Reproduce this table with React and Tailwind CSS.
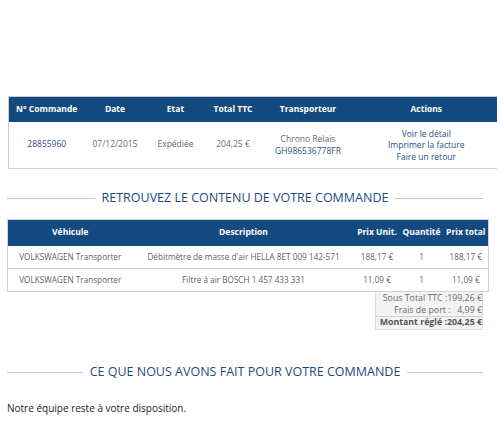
import React from "react";

const font = { fontFamily: '"Open Sans", "Liberation Sans", sans-serif' };

const SectionTitle = ({ children }) => (
  <div className="flex items-center gap-[7px] h-[20px]">
    <div className="flex-1 h-px bg-[#c8c8c8]" />
    <h2 className="text-[12.5px] text-[#1c4a80] uppercase leading-none whitespace-nowrap">
      {children}
    </h2>
    <div className="flex-1 h-px bg-[#c8c8c8]" />
  </div>
);

const orderHead = ["N° Commande", "Date", "Etat", "Total TTC", "Transporteur", "Actions"];

const items = [
  {
    vehicle: "VOLKSWAGEN Transporter",
    desc: "Débitmètre de masse d'air HELLA 8ET 009 142-571",
    unit: "188,17 €",
    qty: "1",
    total: "188,17 €",
  },
  {
    vehicle: "VOLKSWAGEN Transporter",
    desc: "Filtre à air BOSCH 1 457 433 331",
    unit: "11,09 €",
    qty: "1",
    total: "11,09 €",
  },
];

const App = () => {
  return (
    <div className="w-[497px] h-[424px] overflow-hidden bg-white" style={font}>
      {/* commande */}
      <div className="pt-[96px] pl-[8px]">
        <table className="w-[489px] table-fixed border-collapse border-t border-b border-l border-[#cfcfcf] text-[8.5px]">
          <colgroup>
            <col className="w-[76px]" />
            <col className="w-[61px]" />
            <col className="w-[60px]" />
            <col className="w-[55px]" />
            <col className="w-[95px]" />
            <col />
          </colgroup>
          <thead>
            <tr className="bg-[#154a80] h-[25px]">
              {orderHead.map((h) => (
                <th key={h} className="text-white font-bold text-center p-0">
                  {h}
                </th>
              ))}
            </tr>
          </thead>
          <tbody>
            <tr className="h-[47px] text-center text-[#6b6b6b]">
              <td className="text-[#2c4f7c]">28855960</td>
              <td>07/12/2015</td>
              <td className="text-[#5a6a80]">Expédiée</td>
              <td>204,25 €</td>
              <td className="leading-[12px]">
                <div>Chrono Relais</div>
                <div className="text-[#2c4f7c]">GH986536778FR</div>
              </td>
              <td className="leading-[11.5px] text-[#1f4f86]">
                <div>Voir le détail</div>
                <div>Imprimer la facture</div>
                <div>Faire un retour</div>
              </td>
            </tr>
          </tbody>
        </table>
      </div>

      {/* contenu */}
      <div className="px-[7px] w-[490px] mt-[19px]">
        <SectionTitle>Retrouvez le contenu de votre commande</SectionTitle>

        <table className="mt-[11px] w-[482px] table-fixed border-collapse border border-[#d2d2d2] text-[8.2px]">
          <colgroup>
            <col className="w-[125px]" />
            <col className="w-[222px]" />
            <col className="w-[45px]" />
            <col className="w-[44px]" />
            <col />
          </colgroup>
          <thead>
            <tr className="bg-[#154a80] h-[26px] text-white text-[8.5px]">
              <th className="font-bold text-center p-0">Véhicule</th>
              <th className="font-bold text-center p-0">Description</th>
              <th className="font-bold text-center p-0 whitespace-nowrap">Prix Unit.</th>
              <th className="font-bold text-center p-0">Quantité</th>
              <th className="font-bold text-center p-0 whitespace-nowrap">Prix total</th>
            </tr>
          </thead>
          <tbody>
            {items.map((it, i) => (
              <tr key={i} className="h-[23px] border-b border-[#d2d2d2] text-[#5f5f5f] text-center">
                <td className="whitespace-nowrap">{it.vehicle}</td>
                <td className="whitespace-nowrap">{it.desc}</td>
                <td>{it.unit}</td>
                <td>{it.qty}</td>
                <td>{it.total}</td>
              </tr>
            ))}
          </tbody>
        </table>

        <div className="flex justify-end">
          <div className="w-[108px] bg-[#f3f3f3] border border-t-0 border-[#dcdcdc] text-[8.8px] text-[#6a6a6a] text-right leading-[11.5px] whitespace-nowrap">
            <div className="pt-[1px]">Sous Total TTC :199,26 €</div>
            <div>Frais de port :&nbsp;&nbsp;&nbsp;4,99 €</div>
            <div className="border-t border-[#cfcfcf] font-bold text-[#555]">Montant réglé :204,25 €</div>
          </div>
        </div>

        <div className="mt-[33px]">
          <SectionTitle>Ce que nous avons fait pour votre commande</SectionTitle>
        </div>

        <p className="mt-[18px] text-[10px] text-[#222]">Notre équipe reste à votre disposition.</p>
      </div>
    </div>
  );
};

export default App;
